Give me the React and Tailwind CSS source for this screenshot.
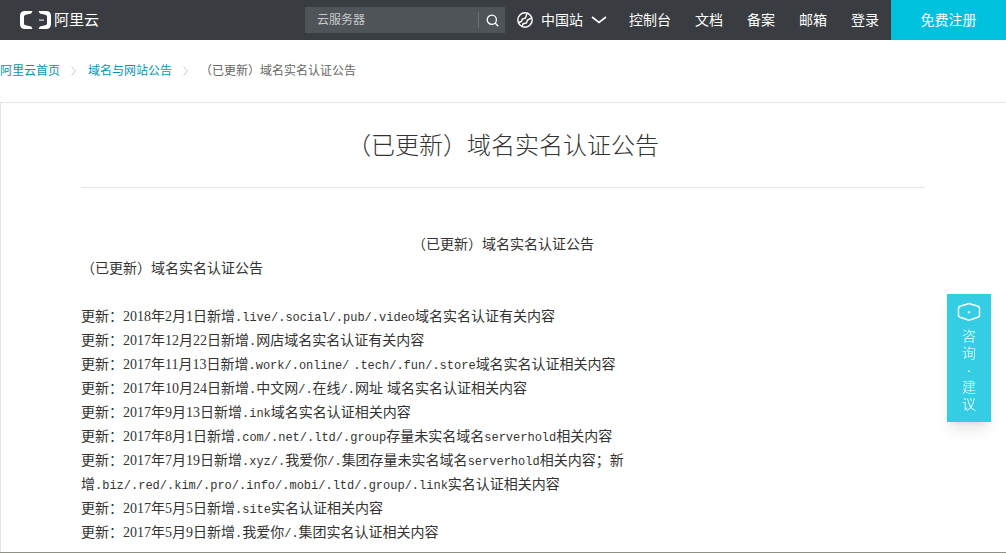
const LATIN = /([0-9]+|[\x21-\x2f\x3a-\x7e]+)/;

const updates = [
  '更新：2018年2月1日新增.live/.social/.pub/.video域名实名认证有关内容',
  '更新：2017年12月22日新增.网店域名实名认证有关内容',
  '更新：2017年11月13日新增.work/.online/ .tech/.fun/.store域名实名认证相关内容',
  '更新：2017年10月24日新增.中文网/.在线/.网址 域名实名认证相关内容',
  '更新：2017年9月13日新增.ink域名实名认证相关内容',
  '更新：2017年8月1日新增.com/.net/.ltd/.group存量未实名域名serverhold相关内容',
  '更新：2017年7月19日新增.xyz/.我爱你/.集团存量未实名域名serverhold相关内容；新增.biz/.red/.kim/.pro/.info/.mobi/.ltd/.group/.link实名认证相关内容',
  '更新：2017年5月5日新增.site实名认证相关内容',
  '更新：2017年5月9日新增.我爱你/.集团实名认证相关内容',
];

const links = ['控制台', '文档', '备案', '邮箱', '登录'];
const title = '（已更新）域名实名认证公告';

function MixedText({ text }) {
  return text.split(LATIN).map((part, i) => {
    if (i % 2 === 0) return part;
    return /[0-9]/.test(part) ? (
      <span key={i} className="font-['Liberation_Serif',serif] leading-none">{part}</span>
    ) : (
      <span key={i} className="font-['Liberation_Mono',monospace] text-xs leading-none">{part}</span>
    );
  });
}

function Logo() {
  return (
    <a href="#" className="flex items-center gap-[3px] text-white" aria-label="阿里云">
      <svg width="31" height="18" viewBox="0 0 31 18" fill="currentColor" aria-hidden="true">
        <path d="M12.500 0H5Q0 0 0 5v8q0 5 5 5h7.500l-1.300-2.500-5.500-1.200Q4 13.900 4 12.500v-7Q4 4.100 5.700 3.700l5.500-1.200z" />
        <path d="M18.500 0H26q5 0 5 5v8q0 5-5 5h-7.500l1.300-2.500 5.500-1.200Q27 13.900 27 12.500v-7Q27 4.100 25.300 3.700l-5.500-1.200z" />
        <path d="M19 8.500h5v1.200h-5z" opacity="0.85" />
      </svg>
      <span className="text-[15px] leading-5">阿里云</span>
    </a>
  );
}

function Header() {
  return (
    <header className="flex h-10 items-center bg-[#393d41] pl-5 text-sm text-white">
      <Logo />
      <form className="ml-auto flex h-[26px] w-[200px] items-center bg-[#4f5458]" onSubmit={(e) => e.preventDefault()}>
        <input
          aria-label="搜索"
          placeholder="云服务器"
          className="min-w-0 flex-1 bg-transparent pl-3 text-xs outline-none placeholder:text-[#c8cacc]"
        />
        <button aria-label="搜索" className="flex h-4 w-[27px] items-center justify-center border-l border-[#6b7074]">
          <svg width="13" height="13" viewBox="0 0 13 13" fill="none" stroke="currentColor" strokeWidth="1.300" aria-hidden="true">
            <circle cx="5.800" cy="5.800" r="4.600" />
            <path d="M9 9l3.300 3.300" />
          </svg>
        </button>
      </form>
      <button className="ml-3 mr-2.5 flex items-center">
        <svg width="16" height="16" viewBox="0 0 16 16" fill="none" stroke="currentColor" strokeWidth="1.400" aria-hidden="true">
          <circle cx="8" cy="8" r="7.200" />
          <path d="M1.500 10.500l3-1 .8-2.500 3-.8L10 1.500M5 14.500l1.200-2.800 3.300-.7 1-3L14.500 6" />
        </svg>
        <span className="ml-2">中国站</span>
        <svg className="ml-2" width="16" height="8" viewBox="0 0 16 8" fill="none" stroke="currentColor" strokeWidth="1.600" aria-hidden="true">
          <path d="M1 1l7 5.500L15 1" />
        </svg>
      </button>
      <nav className="flex">
        {links.map((l) => (
          <a key={l} href="#" className="px-3">{l}</a>
        ))}
      </nav>
      <a href="#" className="flex h-10 w-[115px] items-center justify-center bg-[#00c1de]">免费注册</a>
    </header>
  );
}

function Separator() {
  return (
    <svg className="mx-[9px]" width="10" height="10" viewBox="0 0 10 10" fill="none" stroke="#cccccc" aria-hidden="true">
      <path d="M2.500 0.500l4 4.500-4 4.500" />
    </svg>
  );
}

export default function App() {
  return (
    <div className="flex min-h-screen flex-col border-b border-[#8f8f85] bg-white font-['Liberation_Sans','Noto_Sans_CJK_SC',sans-serif] text-[#333333]">
      <Header />
      <nav className="flex h-[62px] items-center text-xs text-[#666666]" aria-label="面包屑">
        <a href="#" className="text-[#0099b3]">阿里云首页</a>
        <Separator />
        <a href="#" className="text-[#0099b3]">域名与网站公告</a>
        <Separator />
        <span>{title}</span>
      </nav>
      <main className="flex-1 border-l border-t border-[#e5e5e5] pl-20 pr-[81px] pt-6">
        <h1 className="border-b border-[#e5e5e5] pb-[22px] text-center text-2xl font-light leading-[38px]">{title}</h1>
        <article className="mt-11 pb-2 text-sm leading-6">
          <p className="text-center">{title}</p>
          <p>{title}</p>
          <div className="mt-6 max-w-[550px]">
            {updates.map((u) => (
              <p key={u}>
                <MixedText text={u} />
              </p>
            ))}
          </div>
        </article>
      </main>
      <a
        href="#"
        className="fixed right-[15px] top-[294px] flex h-32 w-11 flex-col items-center bg-[#35cde4] pt-2 text-sm font-light leading-[17px] text-white shadow-lg"
      >
        <svg width="24" height="20" viewBox="0 0 24 20" fill="none" stroke="currentColor" strokeWidth="1.500" aria-hidden="true">
          <path d="M12 1.500l9 2.800q1.500.5 1.500 2v7q0 1.500-1.500 2l-9 2.800-9-2.800q-1.500-.5-1.500-2v-7q0-1.500 1.500-2z" />
          <path d="M12 9v2.500M10.800 10.200h2.400" strokeWidth="1" />
        </svg>
        <span className="mt-1.5 w-3.5 text-center">咨询·建议</span>
      </a>
    </div>
  );
}
